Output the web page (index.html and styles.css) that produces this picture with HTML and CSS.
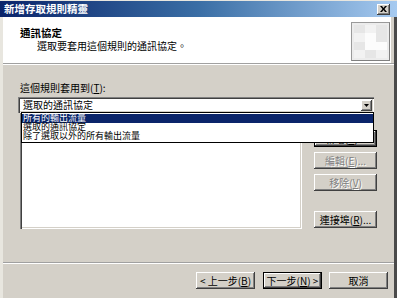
FILE: index.html
```html
<!DOCTYPE html>
<html lang="zh-Hant">
<head>
    <meta charset="UTF-8">
    <meta name="viewport" content="width=device-width, initial-scale=1.0">
    <title>新增存取規則精靈</title>
    <link rel="stylesheet" href="styles.css">
</head>
<body>
    <div class="window">
        <div class="titlebar">
            <span class="title">新增存取規則精靈</span>
            <span class="close">
                <svg width="7" height="6" viewBox="0 0 7 6"><path d="M0 0h2l1.5 2 1.5-2h2l-2.5 3 2.5 3h-2l-1.5-2-1.5 2h-2l2.5-3z" fill="#000"/></svg>
            </span>
        </div>
        <div class="frame">
            <div class="header">
                <div class="header-text">
                    <div class="h-title">通訊協定</div>
                    <div class="h-sub">選取要套用這個規則的通訊協定。</div>
                </div>
                <div class="header-icon">
                    <div class="c1"></div><div class="c2"></div><div class="c1"></div>
                    <div class="c2"></div><div class="c3"></div><div class="c1"></div>
                    <div class="c1"></div><div class="c3"></div><div class="c3"></div>
                    <div class="c2"></div><div class="c1"></div><div class="c2"></div>
                </div>
            </div>
            <div class="sep"></div>

            <div class="content">
                <div class="label">這個規則套用到(<u>T</u>):</div>
                <div class="combo">
                    <span class="combo-text">選取的通訊協定</span>
                    <span class="combo-btn">
                        <svg width="5" height="3" viewBox="0 0 5 3"><path d="M0 0h5l-2.5 3z" fill="#000"/></svg>
                    </span>
                    <div class="dropdown">
                        <div class="opt selected">所有的輸出流量</div>
                        <div class="opt">選取的通訊協定</div>
                        <div class="opt">除了選取以外的所有輸出流量</div>
                    </div>
                </div>
                <div class="list-row">
                    <div class="listbox"></div>
                    <div class="side-buttons">
                        <button class="btn default">新增(<u>A</u>)...</button>
                        <button class="btn" disabled>編輯(<u>E</u>)...</button>
                        <button class="btn" disabled>移除(<u>V</u>)</button>
                        <button class="btn last">連接埠(<u>R</u>)...</button>
                    </div>
                </div>
            </div>

            <div class="sep"></div>
            <div class="footer">
                <button class="btn wide">&lt; 上一步(<u>B</u>)</button>
                <button class="btn wide default">下一步(<u>N</u>) &gt;</button>
                <button class="btn wide cancel">取消</button>
            </div>
        </div>
    </div>
</body>
</html>
```

FILE: styles.css
```css
* {
    box-sizing: border-box;
}

body {
    margin: 0;
    width: 397px;
    height: 298px;
    overflow: hidden;
    background: #d4d0c8;
    font-family: "Noto Sans CJK TC", "Liberation Sans", sans-serif;
    font-size: 10px;
    color: #000;
}

.window {
    width: 397px;
    height: 298px;
    display: flex;
    flex-direction: column;
}

.titlebar {
    height: 17px;
    flex: none;
    display: flex;
    align-items: center;
    justify-content: space-between;
    padding: 0 7px 0 4px;
    background: linear-gradient(to right, #0a246a 0%, #3a6ea5 50%, #a6caf0 100%);
    border-top: 1px solid #e8e6df;
}

.title {
    color: #fff;
    font-weight: bold;
    font-size: 10.5px;
    line-height: 14px;
}

.close {
    width: 13px;
    height: 11px;
    display: flex;
    align-items: center;
    justify-content: center;
    background: #d4d0c8;
    box-shadow: inset -1px -1px #404040, inset 1px 1px #fff, inset -2px -2px #808080;
}

.frame {
    flex: 1;
    display: flex;
    flex-direction: column;
    border-left: 3px solid #e8e6df;
    border-right: 3px solid #4a4a4a;
}

.header {
    height: 46px;
    flex: none;
    margin-right: 3px;
    background: #fff;
    display: flex;
    justify-content: space-between;
    align-items: flex-start;
    padding: 5px 1px 0 17px;
}

.header-text {
    padding-top: 4px;
}

.h-title {
    font-weight: bold;
    font-size: 10.5px;
    line-height: 13px;
}

.h-sub {
    margin: 1px 0 0 17px;
    line-height: 12px;
}

.header-icon {
    width: 39px;
    height: 39px;
    border: 1px solid #9a9a9a;
    border-right-color: #808080;
    border-bottom-color: #808080;
    padding: 2px;
    display: grid;
    grid-template-columns: repeat(3, 1fr);
    grid-template-rows: repeat(4, 1fr);
    background: #ececec;
}

.c1 { background: #e6e6e6; }
.c2 { background: #f2f2f2; }
.c3 { background: #fcfcfc; }

.sep {
    height: 2px;
    flex: none;
    border-top: 1px solid #a0a0a0;
    border-bottom: 1px solid #fff;
}

.content {
    padding: 17px 0 33px 15px;
}

.label {
    margin-left: 2px;
    line-height: 12px;
}

.combo {
    position: relative;
    margin-top: 3px;
    width: 356px;
    height: 16px;
    background: #fff;
    display: flex;
    align-items: center;
    justify-content: space-between;
    padding: 0 2px 0 5px;
    box-shadow: inset 1px 1px #808080, inset 2px 2px #404040, inset -1px -1px #fff, inset -2px -2px #d4d0c8;
}

.combo-text {
    line-height: 12px;
}

.combo-btn {
    width: 11px;
    height: 11px;
    display: flex;
    align-items: center;
    justify-content: center;
    background: #d4d0c8;
    box-shadow: inset -1px -1px #404040, inset 1px 1px #fff, inset -2px -2px #808080;
}

.dropdown {
    position: absolute;
    top: 15px;
    left: 3px;
    width: 353px;
    height: 31px;
    background: #fff;
    border: 1px solid #000;
    padding-top: 1px;
    z-index: 2;
}

.opt {
    height: 9px;
    line-height: 8px;
    font-size: 9px;
    padding-left: 1px;
    white-space: nowrap;
}

.opt.selected {
    background: #0a246a;
    color: #fff;
}

.list-row {
    display: flex;
    height: 116px;
}

.listbox {
    width: 282px;
    margin-left: 2px;
    background: #fff;
    box-shadow: inset 1px 1px #808080, inset 2px 2px #404040, inset -1px -1px #fff, inset -2px -2px #d4d0c8;
}

.side-buttons {
    margin-left: 12px;
    padding: 17px 0 1px;
    display: flex;
    flex-direction: column;
    gap: 5px;
}

.btn {
    width: 63px;
    height: 17px;
    padding: 0;
    border: none;
    background: #d4d0c8;
    font-family: inherit;
    font-size: 10px;
    line-height: 12px;
    color: #000;
    box-shadow: inset -1px -1px #404040, inset 1px 1px #fff, inset -2px -2px #808080;
}

.btn.default {
    box-shadow: inset 0 0 0 1px #000, inset -2px -2px #404040, inset 2px 2px #fff, inset -3px -3px #808080;
}

.btn:disabled {
    color: #808080;
    text-shadow: 1px 1px #fff;
}

.btn.last {
    margin-top: auto;
}

.footer {
    display: flex;
    justify-content: flex-end;
    padding: 8px 6px 0 0;
    gap: 8px;
}

.btn.wide {
    width: 59px;
}

.btn.cancel {
    margin-left: -1px;
}
```
